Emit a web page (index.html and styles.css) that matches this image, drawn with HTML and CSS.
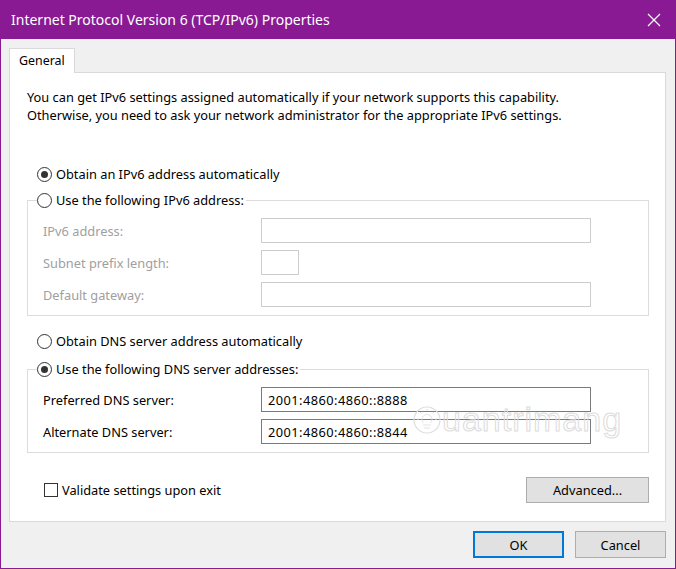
FILE: index.html
```html
<!DOCTYPE html>
<html>
<head>
<meta charset="utf-8">
<link rel="stylesheet" href="styles.css">
</head>
<body>
<div class="window">
  <div class="titlebar">
    <span class="title">Internet Protocol Version 6 (TCP/IPv6) Properties</span>
    <svg class="close" width="14" height="14" viewBox="0 0 14 14"><path d="M1 1 L13 13 M13 1 L1 13" stroke="#fff" stroke-width="1.2" fill="none"/></svg>
  </div>
  <div class="body">
    <div class="tabs"><div class="tab">General</div></div>
    <div class="panel">
      <p class="desc">You can get IPv6 settings assigned automatically if your network supports this capability.<br>Otherwise, you need to ask your network administrator for the appropriate IPv6 settings.</p>
      <div class="option first"><span class="radio checked"></span>Obtain an IPv6 address automatically</div>
      <fieldset class="group">
        <legend class="option"><span class="radio"></span>Use the following IPv6 address:</legend>
        <div class="field disabled"><span class="label">IPv6 address:</span><span class="input"></span></div>
        <div class="field disabled"><span class="label">Subnet prefix length:</span><span class="input short"></span></div>
        <div class="field disabled"><span class="label">Default gateway:</span><span class="input"></span></div>
      </fieldset>
      <div class="option dns"><span class="radio"></span>Obtain DNS server address automatically</div>
      <fieldset class="group">
        <legend class="option"><span class="radio checked"></span>Use the following DNS server addresses:</legend>
        <div class="field"><span class="label">Preferred DNS server:</span><span class="input">2001:4860:4860::8888</span></div>
        <div class="field"><span class="label">Alternate DNS server:</span><span class="input">2001:4860:4860::8844</span></div>
        <div class="watermark">
          <svg width="30" height="34" viewBox="0 0 30 34"><circle cx="15" cy="17" r="13" fill="none" stroke="#dedede" stroke-width="1.2"/><path d="M11 22 h8 M12 25 h6 M11.5 20 a5 5 0 1 1 7 0" fill="none" stroke="#e2e2e2" stroke-width="1"/><path d="M15 6 v2 M8 9 l1.5 1.5 M22 9 l-1.5 1.5 M5 16 h2 M23 16 h2" stroke="#e2e2e2" stroke-width="1"/></svg>
          <span>uantrimang</span>
        </div>
      </fieldset>
      <div class="bottom-row">
        <span class="check"><span class="box"></span>Validate settings upon exit</span>
        <span class="btn advanced">Advanced...</span>
      </div>
    </div>
    <div class="footer">
      <span class="btn default">OK</span>
      <span class="btn">Cancel</span>
    </div>
  </div>
</div>
</body>
</html>
```

FILE: styles.css
```css
* { box-sizing: border-box; }
html, body { margin: 0; padding: 0; background: #f0f0f0; }
body {
  font-family: "Noto Sans", "DejaVu Sans", sans-serif;
  font-size: 12.8px;
  color: #000;
}
.window {
  width: 676px;
  height: 569px;
  display: flex;
  flex-direction: column;
  background: #891a94;
}
.titlebar {
  height: 39px;
  flex: none;
  display: flex;
  align-items: center;
  justify-content: space-between;
  padding: 0 15px 0 11px;
  color: #fff;
}
.title { font-size: 14px; }
.close { display: block; }
.body {
  flex: 1;
  margin: 0 1px 1px 1px;
  background: #f0f0f0;
  padding: 9px 9px 0 8px;
  display: flex;
  flex-direction: column;
}
.tabs { display: flex; height: 24px; position: relative; z-index: 1; }
.tab {
  width: 66px;
  height: 25px;
  background: #fff;
  border: 1px solid #d9d9d9;
  border-bottom: none;
  padding: 3px 0 0 9px;
  font-size: 12.4px;
}
.panel {
  height: 450px;
  background: #fff;
  border: 1px solid #d9d9d9;
  padding: 16px 16px 0 17px;
  display: flex;
  flex-direction: column;
}
.desc { margin: 0; line-height: 17.5px; }
.option {
  display: flex;
  align-items: center;
  height: 18px;
  gap: 4px;
}
.option.first { margin: 41px 0 0 10px; }
.option.dns { margin: 16px 0 0 10px; }
.radio {
  width: 15px;
  height: 15px;
  border: 1px solid #333;
  border-radius: 50%;
  display: flex;
  align-items: center;
  justify-content: center;
  flex: none;
}
.radio.checked::after {
  content: "";
  width: 7px;
  height: 7px;
  border-radius: 50%;
  background: #333;
}
.group {
  margin: 8px 0 0 0;
  border: 1px solid #dcdcdc;
  padding: 9px 0 8px 15px;
  min-width: 0;
  display: flex;
  flex-direction: column;
  gap: 7px;
  position: relative;
}
.group legend {
  padding: 0 2px 0 0;
  margin-left: -6px;
}
.field { display: flex; align-items: center; height: 25px; }
.label { width: 218px; flex: none; }
.input {
  width: 330px;
  height: 25px;
  border: 1px solid #7a7a7a;
  background: #fff;
  padding: 0 0 0 6px;
  display: flex;
  align-items: center;
  letter-spacing: 0.45px;
}
.input.short { width: 38px; }
.disabled .label { color: #a0a0a0; }
.disabled .input { border-color: #cccccc; }
.option.dns + .group { margin-top: 10px; }
.watermark {
  position: absolute;
  left: 384px;
  top: 22px;
  display: flex;
  align-items: center;
}
.watermark span {
  font-family: "Liberation Sans", sans-serif;
  font-size: 34px;
  color: transparent;
  -webkit-text-stroke: 1px #dcdcdc;
  letter-spacing: 1px;
}
.bottom-row {
  margin: 24px 0 0 0;
  display: flex;
  align-items: center;
  justify-content: space-between;
}
.check { display: flex; align-items: center; gap: 4px; margin-left: 17px; }
.box { width: 14px; height: 14px; border: 1px solid #333; background: #fff; }
.btn {
  display: flex;
  align-items: center;
  justify-content: center;
  background: #e1e1e1;
  border: 1px solid #adadad;
  height: 26px;
}
.advanced { width: 123px; }
.footer {
  display: flex;
  justify-content: flex-end;
  gap: 11px;
  padding: 9px 0 0 0;
}
.footer .btn { width: 91px; height: 27px; }
.footer .btn.default { border: 2px solid #0078d7; }
```
